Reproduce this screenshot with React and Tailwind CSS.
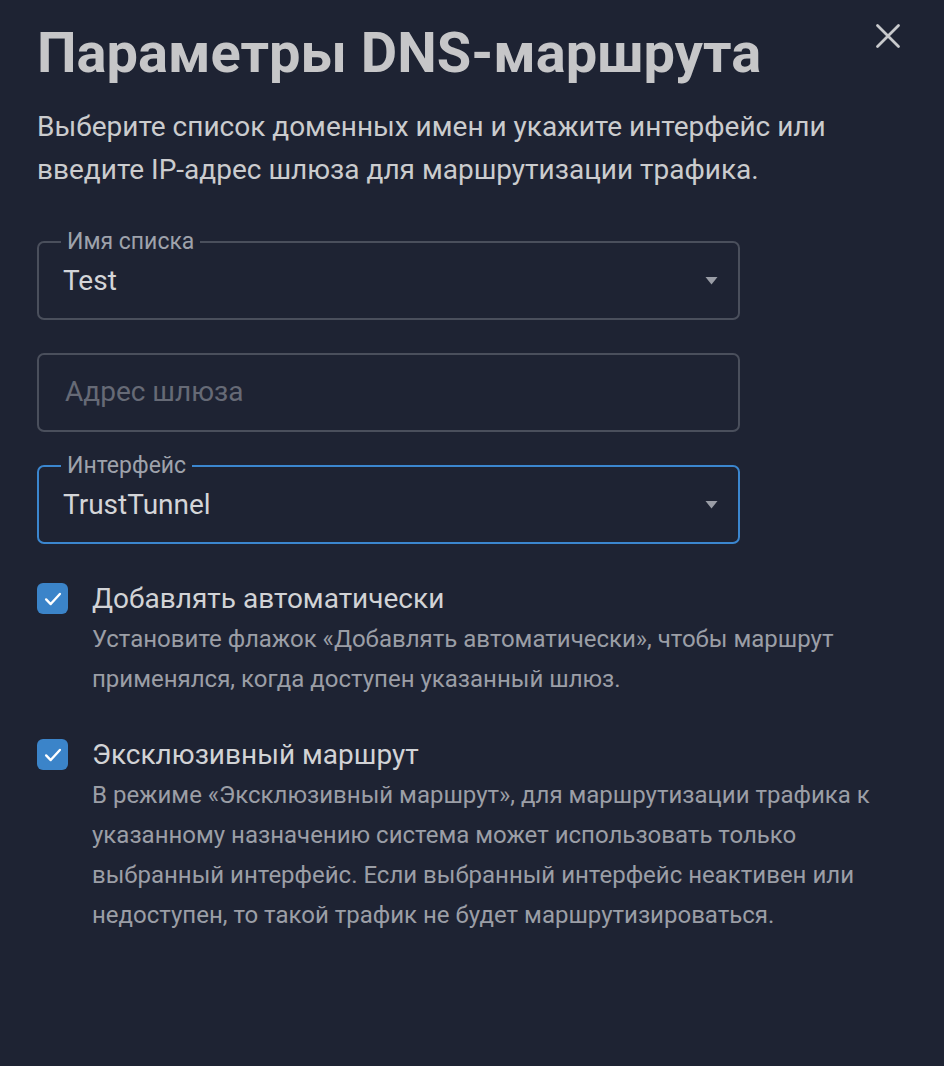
import React from 'react';

const Chevron = () => (
  <svg className="w-[13px] h-[9px] text-[#9a9da6]" viewBox="0 0 13 9" fill="currentColor">
    <path d="M0.5 1h12L6.5 8.5z" />
  </svg>
);

const Check = () => (
  <svg className="w-[22px] h-[22px]" viewBox="0 0 24 24" fill="none" stroke="white" strokeWidth="2.6" strokeLinecap="round" strokeLinejoin="round">
    <path d="M4.5 12.5l5 5 10-11" />
  </svg>
);

const Field = ({ label, value, placeholder, focused, select }) => (
  <div
    className={`relative h-[79px] rounded-[7px] border-2 pl-[24px] pr-[20px] flex items-center justify-between ${focused ? 'border-[#3b86cf]' : 'border-[#4a4f5c]'}`}
  >
    {label && (
      <span className="absolute left-[22px] -top-[15px] px-[6px] bg-[#1e2333] text-[23px] leading-[28px] text-[#9ea2ab]">
        {label}
      </span>
    )}
    {value ? (
      <span className="text-[28px] text-[#d4d5d8]">{value}</span>
    ) : (
      <span className="pl-[2px] -mt-[2px] text-[28px] text-[#666a76]">{placeholder}</span>
    )}
    {select && <Chevron />}
  </div>
);

const CheckItem = ({ title, children }) => (
  <div className="flex gap-[24px]">
    <div className="w-[31px] h-[31px] shrink-0 rounded-[6px] bg-[#3b84c9] flex items-center justify-center">
      <Check />
    </div>
    <div className="max-w-[797px]">
      <div className="text-[28px] leading-[31px] text-[#d2d3d6]">{title}</div>
      <p className="mt-[5px] text-[24px] leading-[40px] text-[#9b9ea6]">{children}</p>
    </div>
  </div>
);

export default function App() {
  return (
    <div
      className="min-h-[1066px] w-[944px] bg-[#1e2333] relative px-[37px] pt-[18px]"
      style={{ fontFamily: 'Roboto, "Liberation Sans", sans-serif' }}
    >
      <button className="absolute right-[42px] top-[22px] text-[#c8c9cc]">
        <svg className="w-[28px] h-[28px]" viewBox="0 0 24 24" fill="none" stroke="currentColor" strokeWidth="2.4" strokeLinecap="round">
          <path d="M3 3l18 18M21 3L3 21" />
        </svg>
      </button>
      <h1 className="text-[56px] leading-[70px] font-bold text-[#c6c6c8]">Параметры DNS-маршрута</h1>
      <p className="mt-[17px] text-[28px] leading-[43px] text-[#cbccce] max-w-[840px]">
        Выберите список доменных имен и укажите интерфейс или введите IP-адрес шлюза для маршрутизации трафика.
      </p>
      <div className="mt-[50px] w-[703px] flex flex-col gap-[33px]">
        <Field label="Имя списка" value="Test" select />
        <Field placeholder="Адрес шлюза" />
        <Field label="Интерфейс" value="TrustTunnel" focused select />
      </div>
      <div className="mt-[39px] flex flex-col gap-[40px]">
        <CheckItem title="Добавлять автоматически">
          Установите флажок «Добавлять автоматически», чтобы маршрут применялся, когда доступен указанный шлюз.
        </CheckItem>
        <CheckItem title="Эксклюзивный маршрут">
          В режиме «Эксклюзивный маршрут», для маршрутизации трафика к указанному назначению система может использовать только выбранный интерфейс. Если выбранный интерфейс неактивен или недоступен, то такой трафик не будет маршрутизироваться.
        </CheckItem>
      </div>
    </div>
  );
}
